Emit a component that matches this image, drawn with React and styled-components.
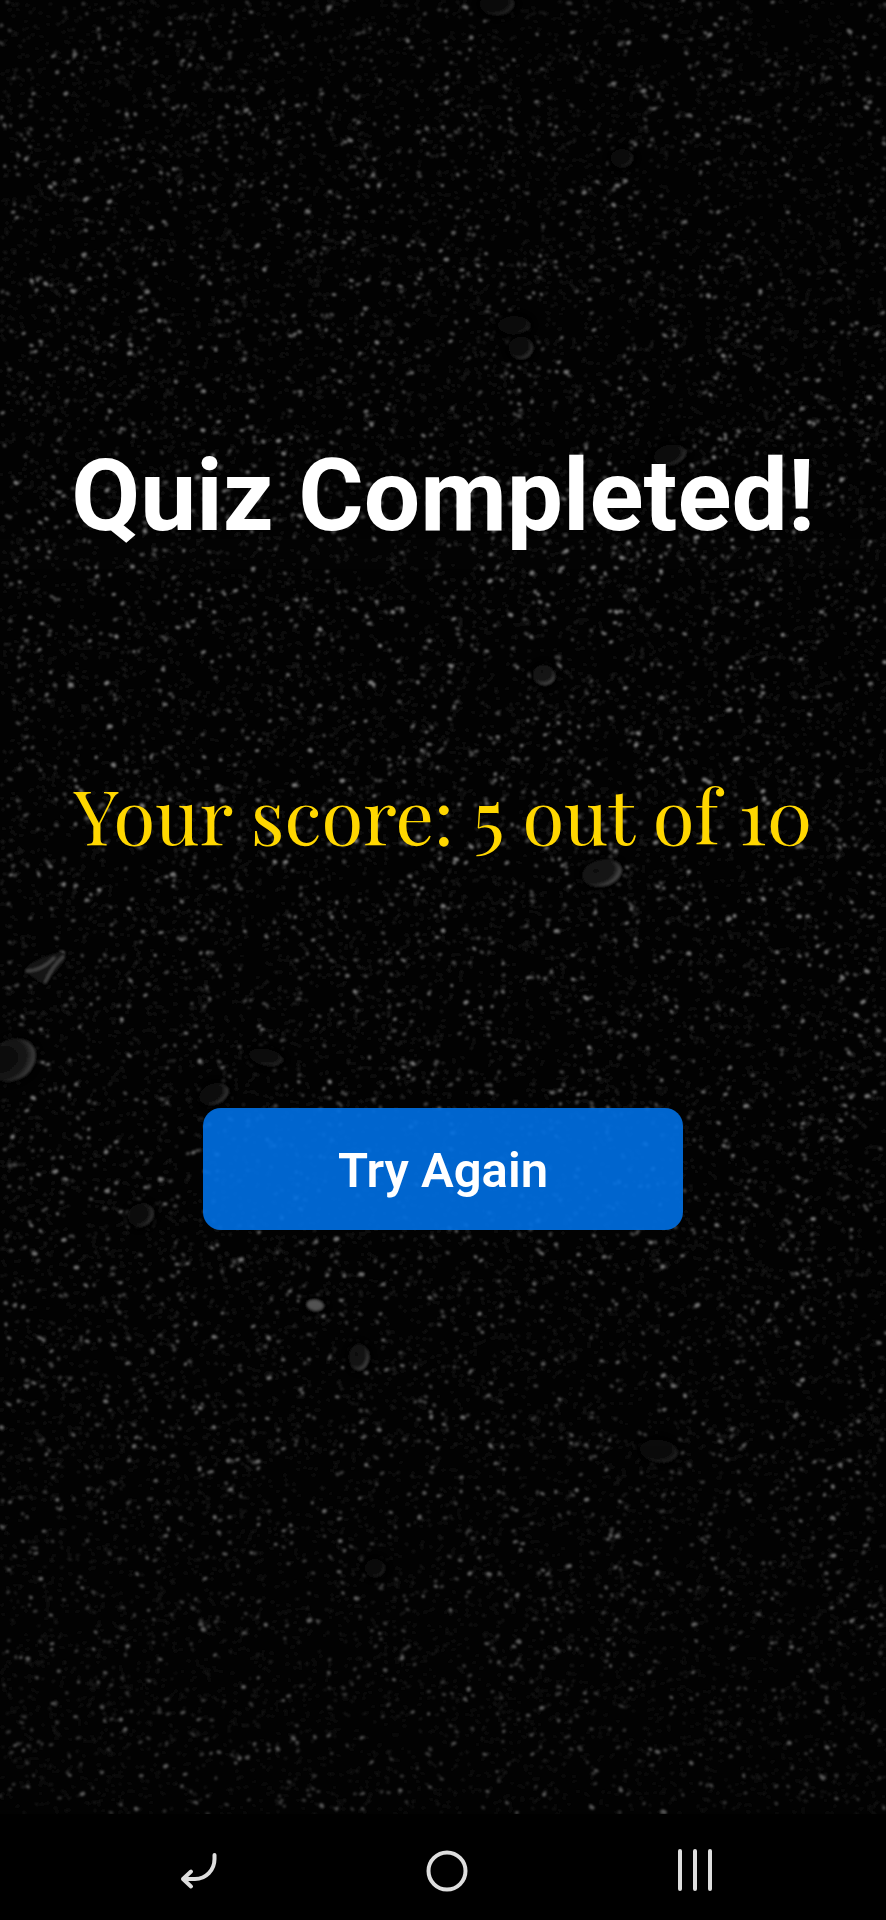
import React from "react";
import styled, { createGlobalStyle } from "styled-components";

const GlobalStyle = createGlobalStyle`
  * { box-sizing: border-box; }
  body { margin: 0; background: #000; }
`;

const Page = styled.div`
  display: flex;
  flex-direction: column;
  min-height: 100vh;
  background: #000;
  font-family: Roboto, sans-serif;
`;

const Screen = styled.main`
  position: relative;
  isolation: isolate;
  overflow: hidden;
  flex: 1;
  display: flex;
  flex-direction: column;
  align-items: center;
  justify-content: center;
  padding-bottom: 148px;
  text-align: center;
  background: #030303;
`;

const Backdrop = styled.svg`
  position: absolute;
  inset: 0;
  z-index: -1;
  width: 100%;
  height: 100%;
`;

const Title = styled.h1`
  margin: 0 0 208px;
  color: #fff;
  font-size: 100px;
  font-weight: 700;
  line-height: 120px;
`;

const Score = styled.p`
  margin: 0 0 244px;
  color: #ffd700;
  font-family: "Playfair Display", "Liberation Serif", serif;
  font-size: 76px;
  line-height: 100px;
`;

const PrimaryButton = styled.button`
  width: 480px;
  max-width: 80%;
  padding: 34px 16px 30px;
  border: 0;
  border-radius: 18px;
  background: rgba(0, 112, 228, 0.9);
  color: #fff;
  font-family: inherit;
  font-size: 49px;
  font-weight: 600;
  line-height: 58px;
  cursor: pointer;
`;

const NavBar = styled.nav`
  display: flex;
  justify-content: center;
  height: 106px;
  padding: 8px 0 0 8px;
  background: #000;
`;

const NavButton = styled.button`
  display: grid;
  place-items: center;
  width: 28vw;
  padding: 0;
  border: 0;
  background: none;
  color: #dedede;
  cursor: pointer;
`;

const NavIcon = styled.svg`
  width: 48px;
  height: 48px;
  fill: none;
  stroke: currentColor;
  stroke-width: 4;
  stroke-linecap: round;
  stroke-linejoin: round;
`;

const WIDTH = 886;
const HEIGHT = 1814;

function createRandom(seed) {
  let s = seed;
  return () => {
    s = (s + 0x6d2b79f5) | 0;
    let t = Math.imul(s ^ (s >>> 15), 1 | s);
    t = (t + Math.imul(t ^ (t >>> 7), 61 | t)) ^ t;
    return ((t ^ (t >>> 14)) >>> 0) / 4294967296;
  };
}

function scatter(seed, count) {
  const random = createRandom(seed);
  let d = "";
  for (let i = 0; i < count; i += 1) {
    const x = (random() * WIDTH).toFixed(1);
    const y = (random() * HEIGHT).toFixed(1);
    d += `M${x} ${y}l${(random() * 2).toFixed(1)} ${(random() * 2 - 1).toFixed(1)}`;
  }
  return d;
}

const grains = [
  { d: scatter(3, 15000), color: "#131313", width: 3 },
  { d: scatter(11, 6000), color: "#2a2a2a", width: 2 },
  { d: scatter(27, 2800), color: "#4c4c4c", width: 3 },
  { d: scatter(42, 1100), color: "#707070", width: 3 },
  { d: scatter(58, 260), color: "#7c7c7c", width: 4 },
];

const pebbles = [
  { x: 497, y: 4, rx: 17, ry: 11, turn: 0, light: 0.6 },
  { x: 622, y: 158, rx: 11, ry: 9, turn: 0, light: 0.5 },
  { x: 514, y: 325, rx: 16, ry: 9, turn: 0, light: 0.4 },
  { x: 521, y: 348, rx: 12, ry: 11, turn: 0, light: 0.7 },
  { x: 670, y: 455, rx: 16, ry: 10, turn: -10, light: 0.6 },
  { x: 544, y: 675, rx: 11, ry: 10, turn: 20, light: 1 },
  { x: 602, y: 873, rx: 20, ry: 13, turn: -12, light: 1 },
  { x: 12, y: 1060, rx: 25, ry: 20, turn: -30, light: 0.8 },
  { x: 266, y: 1057, rx: 17, ry: 8, turn: 12, light: 0.5 },
  { x: 214, y: 1094, rx: 15, ry: 10, turn: -20, light: 0.7 },
  { x: 141, y: 1215, rx: 13, ry: 11, turn: -20, light: 0.7 },
  { x: 315, y: 1305, rx: 9, ry: 6, turn: 8, light: 1.5 },
  { x: 359, y: 1357, rx: 10, ry: 13, turn: 0, light: 1 },
  { x: 659, y: 1451, rx: 19, ry: 11, turn: 8, light: 0.5 },
  { x: 375, y: 1568, rx: 10, ry: 9, turn: 0, light: 0.5 },
];

function BlackSand() {
  return (
    <Backdrop viewBox={`0 0 ${WIDTH} ${HEIGHT}`} preserveAspectRatio="xMidYMid slice" aria-hidden="true">
      <defs>
        <radialGradient id="pebble" cx="0.36" cy="0.38" r="0.7">
          <stop offset="0" stopColor="#101010" />
          <stop offset="0.65" stopColor="#181818" />
          <stop offset="0.92" stopColor="#4c4c4c" />
          <stop offset="1" stopColor="#202020" />
        </radialGradient>
        <radialGradient id="shade">
          <stop offset="0.6" stopColor="#020202" />
          <stop offset="1" stopColor="#020202" stopOpacity="0" />
        </radialGradient>
        <linearGradient id="fade" x1="0" y1="0" x2="0" y2="1">
          <stop offset="0" stopColor="#000" stopOpacity="0.2" />
          <stop offset="0.3" stopColor="#000" stopOpacity="0" />
          <stop offset="0.65" stopColor="#000" stopOpacity="0.05" />
          <stop offset="1" stopColor="#000" stopOpacity="0.3" />
        </linearGradient>
        <filter id="soften">
          <feGaussianBlur stdDeviation="0.8" />
        </filter>
      </defs>
      <g filter="url(#soften)" fill="none" strokeLinecap="round">
        {grains.map((g) => (
          <path key={g.color} d={g.d} stroke={g.color} strokeWidth={g.width} />
        ))}
      </g>
      <g filter="url(#soften)">
        {pebbles.map((p) => (
          <g key={`${p.x}-${p.y}`} transform={`translate(${p.x} ${p.y}) rotate(${p.turn})`}>
            <ellipse rx={p.rx + 7} ry={p.ry + 7} fill="url(#shade)" />
            <ellipse rx={p.rx} ry={p.ry} fill="url(#pebble)" opacity={Math.min(p.light, 1)} />
            {p.light > 1 && <ellipse rx={p.rx - 1} ry={p.ry - 1} fill="#5c5c5c" />}
          </g>
        ))}
        <path d="M24 971Q29 960 60 952Q69 953 63 963L45 985Q32 977 24 971Z" fill="#161616" />
        <path d="M26 971Q42 971 55 957M45 983Q52 966 64 956" fill="none" stroke="#444" strokeWidth="3" />
      </g>
      <rect width={WIDTH} height={HEIGHT} fill="url(#fade)" />
    </Backdrop>
  );
}

export default function App() {
  return (
    <Page>
      <GlobalStyle />
      <Screen>
        <BlackSand />
        <Title>Quiz Completed!</Title>
        <Score>Your score: 5 out of 10</Score>
        <PrimaryButton type="button">Try Again</PrimaryButton>
      </Screen>
      <NavBar aria-label="System navigation">
        <NavButton type="button" aria-label="Back">
          <NavIcon viewBox="0 0 48 48">
            <path d="M39.5 8V12C39.5 23 31 32 20 32H8M16 24.5L8 32L16 39.5" />
          </NavIcon>
        </NavButton>
        <NavButton type="button" aria-label="Home">
          <NavIcon viewBox="0 0 48 48">
            <circle cx="24" cy="24" r="18.5" />
          </NavIcon>
        </NavButton>
        <NavButton type="button" aria-label="Recent apps">
          <NavIcon viewBox="0 0 48 48">
            <path d="M9 4V42M24 4V42M39 4V42" />
          </NavIcon>
        </NavButton>
      </NavBar>
    </Page>
  );
}
